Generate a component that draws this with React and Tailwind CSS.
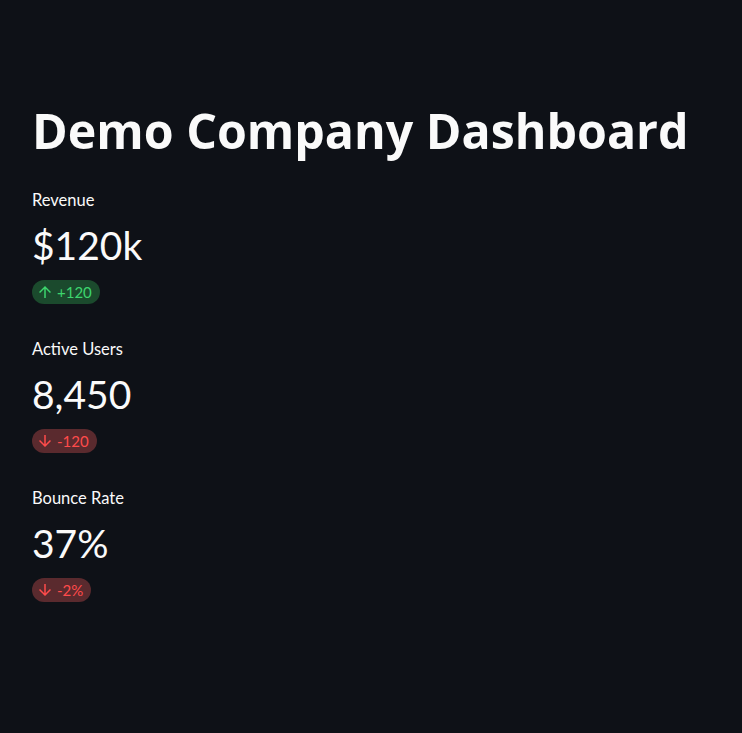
import React from 'react';

const metrics = [
  { label: 'Revenue', value: '$120k', delta: '+120', up: true },
  { label: 'Active Users', value: '8,450', delta: '-120', up: false },
  { label: 'Bounce Rate', value: '37%', delta: '-2%', up: false },
];

function Arrow({ up }) {
  return (
    <svg viewBox="0 0 24 24" className="w-[18px] h-[18px] shrink-0" fill="currentColor">
      {up ? (
        <path d="M4 12l1.41 1.41L11 7.83V20h2V7.83l5.58 5.59L20 12l-8-8-8 8z" />
      ) : (
        <path d="M20 12l-1.41-1.41L13 16.17V4h-2v12.17l-5.58-5.59L4 12l8 8 8-8z" />
      )}
    </svg>
  );
}

function Metric({ label, value, delta, up }) {
  return (
    <div className="flex flex-col items-start">
      <div className="text-[16.5px] leading-[20px] text-[#fafafa]">{label}</div>
      <div className="mt-[10px] text-[39px] leading-[50px] text-[#fafafa]">{value}</div>
      <div
        className={
          up
            ? 'mt-[10px] h-[24px] flex items-center gap-[3px] pl-[4px] pr-[8px] rounded-full bg-[#1b4a2d] text-[#3dd56d]'
            : 'mt-[10px] h-[24px] flex items-center gap-[3px] pl-[4px] pr-[8px] rounded-full bg-[#5a2a2e] text-[#ff4b4b]'
        }
      >
        <Arrow up={up} />
        <span className="text-[15px] leading-[24px]">{delta}</span>
      </div>
    </div>
  );
}

export default function App() {
  return (
    <div className="min-h-[733px] bg-[#0e1117] font-['Lato',sans-serif] pl-[32px] pt-[100px]">
      <h1 className="font-['Open_Sans',sans-serif] text-[48.3px] leading-[60px] font-bold text-[#fafafa]">
        Demo Company Dashboard
      </h1>
      <div className="mt-[30px] flex flex-col gap-[35px]">
        {metrics.map((m) => (
          <Metric key={m.label} {...m} />
        ))}
      </div>
    </div>
  );
}
